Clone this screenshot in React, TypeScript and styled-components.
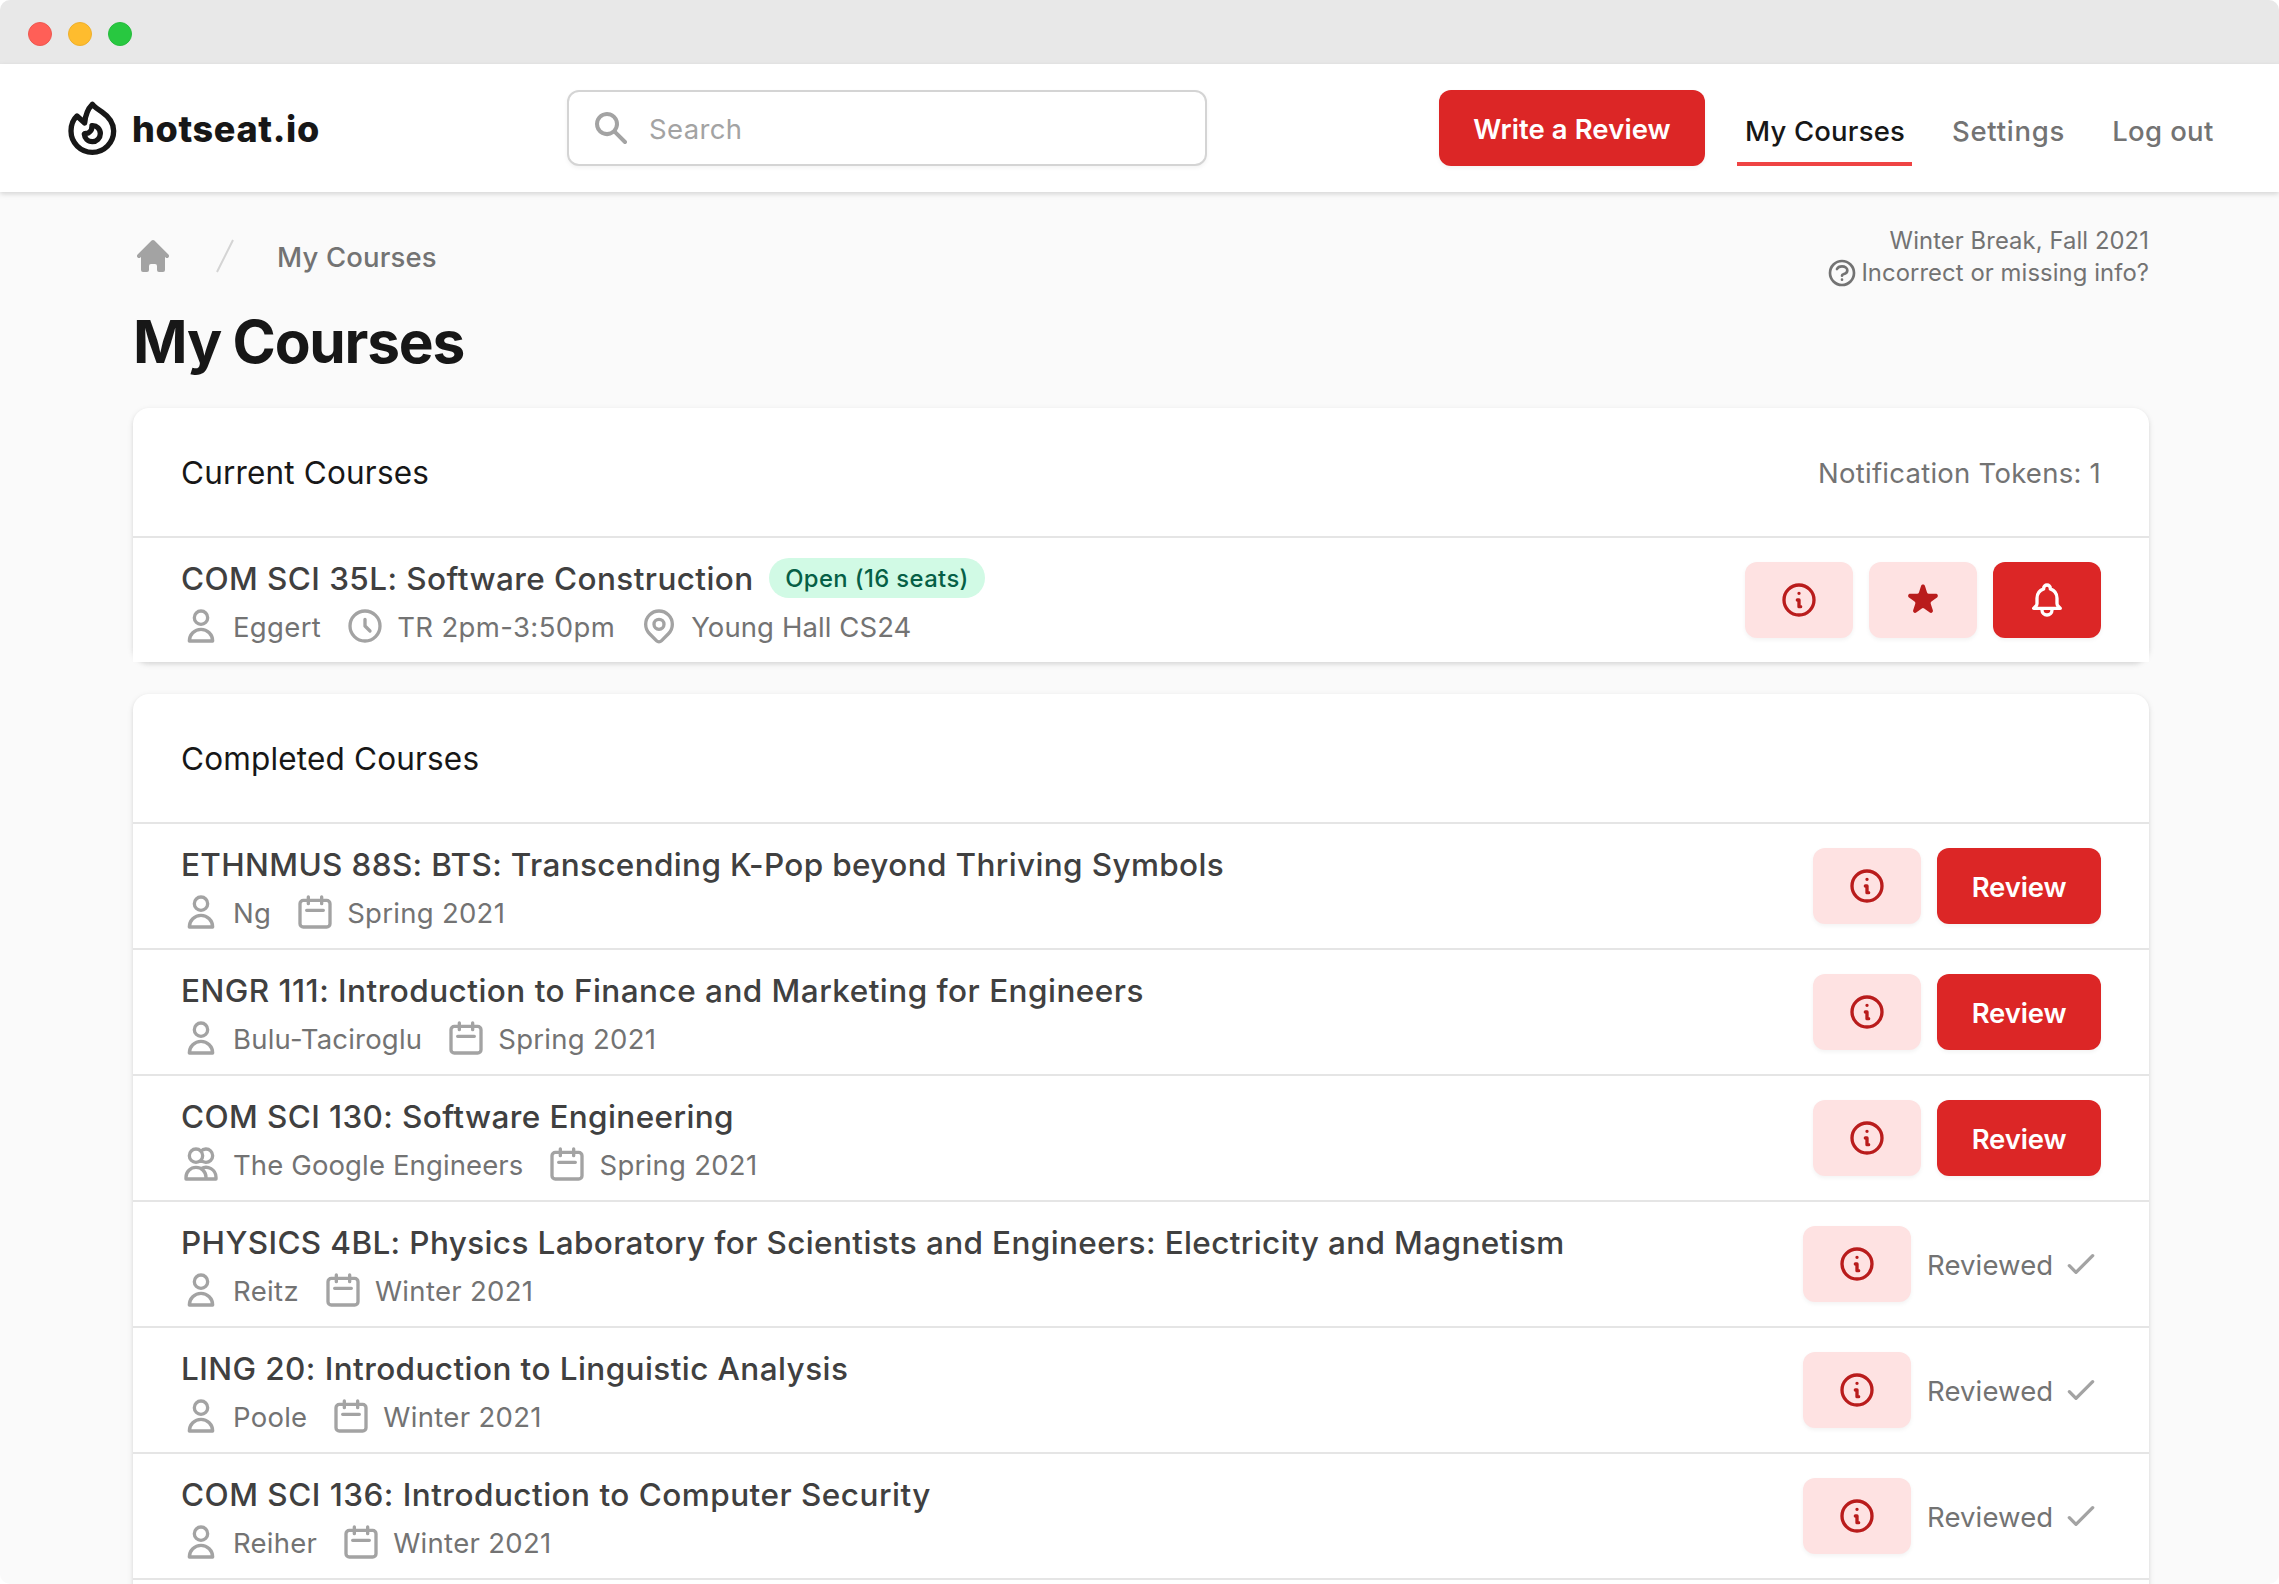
import React from 'react';
import styled, { createGlobalStyle, css } from 'styled-components';

const GlobalStyle = createGlobalStyle`
  *, *::before, *::after { box-sizing: border-box; }
  body {
    margin: 0;
    background: #ffffff;
    font-family: Inter, 'Liberation Sans', sans-serif;
    -webkit-font-smoothing: antialiased;
  }
  h1, h2, h3, ul, p { margin: 0; padding: 0; font-weight: inherit; font-size: inherit; }
  ul { list-style: none; }
  button, input { font: inherit; }
`;

const color = {
  ink: '#171717',
  title: '#404040',
  muted: '#737373',
  icon: '#a3a3a3',
  line: '#e5e5e5',
  page: '#fafafa',
  red: '#dc2626',
  redDark: '#b91c1c',
  redSoft: '#fee2e2',
};

/* ---------- icons ---------- */

const Svg = styled.svg<{ $size?: number; $color?: string }>`
  display: block;
  flex: none;
  width: ${(p) => p.$size ?? 40}px;
  height: ${(p) => p.$size ?? 40}px;
  color: ${(p) => p.$color ?? color.icon};
`;

type IconProps = { size?: number; tint?: string };

const outline = (d: string[]) =>
  function OutlineIcon({ size, tint }: IconProps) {
    return (
      <Svg
        $size={size}
        $color={tint}
        viewBox="0 0 24 24"
        fill="none"
        stroke="currentColor"
        strokeWidth={2}
        strokeLinecap="round"
        strokeLinejoin="round"
        aria-hidden
      >
        {d.map((path) => (
          <path key={path} d={path} />
        ))}
      </Svg>
    );
  };

const solid = (d: string) =>
  function SolidIcon({ size, tint }: IconProps) {
    return (
      <Svg $size={size} $color={tint} viewBox="0 0 20 20" fill="currentColor" aria-hidden>
        <path fillRule="evenodd" clipRule="evenodd" d={d} />
      </Svg>
    );
  };

const UserIcon = outline(['M16 7a4 4 0 11-8 0 4 4 0 018 0z', 'M12 14a7 7 0 00-7 7h14a7 7 0 00-7-7z']);
const UsersIcon = outline([
  'M12 4.354a4 4 0 110 5.292M15 21H3v-1a6 6 0 0112 0v1zm0 0h6v-1a6 6 0 00-9-5.197M13 7a4 4 0 11-8 0 4 4 0 018 0z',
]);
const CalendarIcon = outline([
  'M8 7V3m8 4V3m-9 8h10M5 21h14a2 2 0 002-2V7a2 2 0 00-2-2H5a2 2 0 00-2 2v12a2 2 0 002 2z',
]);
const ClockIcon = outline(['M12 8v4l3 3m6-3a9 9 0 11-18 0 9 9 0 0118 0z']);
const PinIcon = outline([
  'M17.657 16.657L13.414 20.9a1.998 1.998 0 01-2.827 0l-4.244-4.243a8 8 0 1111.314 0z',
  'M15 11a3 3 0 11-6 0 3 3 0 016 0z',
]);
const InfoIcon = outline(['M13 16h-1v-4h-1m1-4h.01M21 12a9 9 0 11-18 0 9 9 0 0118 0z']);
const BellIcon = outline([
  'M15 17h5l-1.405-1.405A2.032 2.032 0 0118 14.158V11a6.002 6.002 0 00-4-5.659V5a2 2 0 10-4 0v.341C7.67 6.165 6 8.388 6 11v3.159c0 .538-.214 1.055-.595 1.436L4 17h5m6 0v1a3 3 0 11-6 0v-1m6 0H9',
]);
const CheckIcon = outline(['M5 13l4 4L19 7']);
const QuestionIcon = outline([
  'M8.228 9c.549-1.165 2.03-2 3.772-2 2.21 0 4 1.343 4 3 0 1.4-1.278 2.575-3.006 2.907-.542.104-.994.54-.994 1.093m0 3h.01M21 12a9 9 0 11-18 0 9 9 0 0118 0z',
]);
const SearchIcon = solid(
  'M8 4a4 4 0 100 8 4 4 0 000-8zM2 8a6 6 0 1110.89 3.476l4.817 4.817a1 1 0 01-1.414 1.414l-4.816-4.816A6 6 0 012 8z',
);
const HomeIcon = solid(
  'M10.707 2.293a1 1 0 00-1.414 0l-7 7a1 1 0 001.414 1.414L4 10.414V17a1 1 0 001 1h2a1 1 0 001-1v-2a1 1 0 011-1h2a1 1 0 011 1v2a1 1 0 001 1h2a1 1 0 001-1v-6.586l.293.293a1 1 0 001.414-1.414l-7-7z',
);
const SlashIcon = solid('M5.555 17.776l8-16 .894.448-8 16-.894-.448z');
const StarIcon = solid(
  'M9.049 2.927c.3-.921 1.603-.921 1.902 0l1.07 3.292a1 1 0 00.95.69h3.462c.969 0 1.371 1.24.588 1.81l-2.8 2.034a1 1 0 00-.364 1.118l1.07 3.292c.3.921-.755 1.688-1.54 1.118l-2.8-2.034a1 1 0 00-1.175 0l-2.8 2.034c-.784.57-1.838-.197-1.539-1.118l1.07-3.292a1 1 0 00-.364-1.118L2.98 8.72c-.783-.57-.38-1.81.588-1.81h3.461a1 1 0 00.951-.69l1.07-3.292z',
);

const FlameSvg = styled.svg`
  display: block;
  flex: none;
  width: 50.67px;
  height: 58.67px;
`;

const FlameLogo = () => (
  <FlameSvg
    viewBox="50 56 152 176"
    fill="none"
    stroke={color.ink}
    strokeWidth={16}
    strokeLinejoin="round"
    strokeLinecap="round"
    aria-hidden
  >
    <path d="M126 72C114 84 105 104 103 128L80 107C68 118 62 134 62 152A64 64 0 0 0 190 152C190 124 174 108 155 95C144 88 134 81 126 72Z" />
    <path d="M125 136C140 135 150 146 150 160A24.500 24.500 0 0 1 126 184C112 184 103 174 102 161C104 157 109 161 114 158C122 153 126 145 125 136Z" />
  </FlameSvg>
);

/* ---------- window chrome ---------- */

const Window = styled.div`
  width: 2279px;
  height: 1584px;
  overflow: hidden;
  border-radius: 10px;
  background: ${color.page};
  color: ${color.ink};
`;

const TitleBar = styled.div`
  display: flex;
  align-items: center;
  gap: 16px;
  height: 64px;
  padding: 4px 0 0 28px;
  background: #e8e8e8;
`;

const Light = styled.span<{ $fill: string; $edge: string }>`
  width: 24px;
  height: 24px;
  border-radius: 50%;
  background: ${(p) => p.$fill};
  border: 1px solid ${(p) => p.$edge};
`;

/* ---------- header ---------- */

const Header = styled.header`
  display: flex;
  align-items: center;
  height: 128px;
  padding-left: 66.7px;
  background: #ffffff;
  box-shadow: 0 2px 6px rgba(0, 0, 0, 0.1), 0 2px 4px rgba(0, 0, 0, 0.06);
`;

const Brand = styled.a`
  display: flex;
  align-items: center;
  gap: 14.6px;
  width: 500.3px;
  flex: none;
`;

const BrandName = styled.span`
  padding-top: 2px;
  font-size: 36px;
  line-height: 44px;
  font-weight: 800;
  letter-spacing: 0.656px;
`;

const SearchBox = styled.label`
  display: flex;
  align-items: center;
  gap: 18px;
  flex: none;
  width: 640px;
  height: 76px;
  padding: 0 22px;
  background: #ffffff;
  border: 2px solid #d4d4d4;
  border-radius: 12px;
  box-shadow: 0 2px 4px rgba(0, 0, 0, 0.05);
`;

const SearchInput = styled.input`
  flex: 1;
  min-width: 0;
  padding: 1px 0 0;
  border: 0;
  outline: 0;
  background: transparent;
  font-size: 27.5px;
  line-height: 40px;
  letter-spacing: 0.35px;
  &::placeholder {
    color: ${color.icon};
    opacity: 1;
  }
`;

const Nav = styled.nav`
  display: flex;
  gap: 32px;
  margin-left: 232px;
`;

const NavLink = styled.a<{ $active?: boolean; $track: number }>`
  height: 76px;
  padding: 20px 7px 0 8px;
  border-bottom: 4px solid ${(p) => (p.$active ? '#ef4444' : 'transparent')};
  color: ${(p) => (p.$active ? color.ink : color.muted)};
  font-size: 27.5px;
  line-height: 42px;
  font-weight: 500;
  letter-spacing: ${(p) => p.$track}px;
  white-space: nowrap;
`;

const Button = styled.button<{ $soft?: boolean; $width: number; $track?: number }>`
  display: flex;
  align-items: center;
  justify-content: center;
  flex: none;
  width: ${(p) => p.$width}px;
  height: 76px;
  padding: 0;
  border: 0;
  border-radius: 12px;
  box-shadow: 0 2px 4px rgba(0, 0, 0, 0.05);
  font-size: 27.5px;
  line-height: 40px;
  font-weight: 600;
  letter-spacing: ${(p) => p.$track ?? 0}px;
  white-space: nowrap;
  ${(p) =>
    p.$soft
      ? css`
          background: ${color.redSoft};
          color: ${color.redDark};
        `
      : css`
          background: ${color.red};
          color: #ffffff;
        `}
`;

const Label = styled.span`
  padding-top: 1px;
`;

/* ---------- page heading ---------- */

const Main = styled.main`
  padding: 0 130px 0 133px;
`;

const Intro = styled.div`
  display: flex;
  justify-content: space-between;
  align-items: flex-start;
  height: 216px;
`;

const Heading = styled.div`
  padding-top: 44px;
`;

const Breadcrumbs = styled.nav`
  display: flex;
  align-items: center;
  gap: 32px;
  height: 40px;
`;

const Crumb = styled.span`
  padding-top: 1px;
  color: ${color.muted};
  font-size: 27.5px;
  line-height: 38px;
  font-weight: 500;
  letter-spacing: 0.16px;
`;

const PageTitle = styled.h1`
  margin-top: 26px;
  font-size: 58.6px;
  line-height: 80px;
  font-weight: 700;
  letter-spacing: -1.25px;
  word-spacing: -1px;
`;

const Term = styled.div`
  display: flex;
  flex-direction: column;
  align-items: flex-end;
  padding-top: 33px;
  color: ${color.muted};
  font-size: 23.8px;
  line-height: 32px;
  letter-spacing: 0.09px;
`;

const TermLink = styled.a`
  display: flex;
  align-items: center;
  gap: 3px;
`;

/* ---------- cards ---------- */

const Card = styled.section`
  margin-bottom: 32px;
  background: #ffffff;
  border-radius: 16px;
  box-shadow: 0 2px 6px rgba(0, 0, 0, 0.1), 0 2px 4px rgba(0, 0, 0, 0.06);
`;

const CardHeader = styled.header`
  display: flex;
  align-items: center;
  justify-content: space-between;
  height: 128px;
  padding: 0 48px;
`;

const CardTitle = styled.h2`
  padding-top: 2px;
  font-size: 31.5px;
  line-height: 46px;
  letter-spacing: 0.17px;
`;

const Tokens = styled.p`
  padding-top: 1px;
  color: ${color.muted};
  font-size: 27.5px;
  line-height: 38px;
  letter-spacing: 0.25px;
`;

const Row = styled.li`
  display: flex;
  align-items: center;
  justify-content: space-between;
  height: 126px;
  padding: 0 48px;
  background: #ffffff;
  border-top: 2px solid ${color.line};
`;

const TitleLine = styled.div`
  display: flex;
  align-items: center;
  gap: 15.500px;
  height: 48px;
  margin-bottom: 4px;
`;

const CourseTitle = styled.h3<{ $track: number }>`
  padding-top: 2px;
  color: ${color.title};
  font-size: 31.5px;
  line-height: 46px;
  font-weight: 500;
  letter-spacing: ${(p) => p.$track}px;
  white-space: nowrap;
`;

const Badge = styled.span`
  display: flex;
  align-items: center;
  width: 216px;
  height: 40px;
  padding: 1px 0 0 16px;
  border-radius: 20px;
  background: #d1fae5;
  color: #065f46;
  font-size: 23.8px;
  line-height: 39px;
  font-weight: 500;
  letter-spacing: 0.4px;
  white-space: nowrap;
`;

const MetaLine = styled.div`
  display: flex;
  gap: 24px;
`;

const Meta = styled.span<{ $track: number }>`
  display: flex;
  align-items: center;
  gap: 12px;
  height: 40px;
  color: ${color.muted};
  font-size: 27.5px;
  line-height: 38px;
  letter-spacing: ${(p) => p.$track}px;
  white-space: nowrap;
`;

const Actions = styled.div`
  display: flex;
  align-items: center;
  gap: 16px;
`;

const Reviewed = styled.span`
  display: flex;
  align-items: center;
  justify-content: space-between;
  width: 174px;
  color: ${color.muted};
  font-size: 27.5px;
  line-height: 38px;
  letter-spacing: 0.12px;
`;

/* ---------- data ---------- */

type Fact = { icon: React.ComponentType<IconProps>; text: string; track: number };
type Course = { title: string; track: number; facts: Fact[]; seats?: string; reviewed?: boolean };

const spring: Fact = { icon: CalendarIcon, text: 'Spring 2021', track: 0.28 };
const winter: Fact = { icon: CalendarIcon, text: 'Winter 2021', track: 0.32 };

const current: Course = {
  title: 'COM SCI 35L: Software Construction',
  track: 0.42,
  seats: 'Open (16 seats)',
  facts: [
    { icon: UserIcon, text: 'Eggert', track: 0.34 },
    { icon: ClockIcon, text: 'TR 2pm-3:50pm', track: 0.38 },
    { icon: PinIcon, text: 'Young Hall CS24', track: 0.09 },
  ],
};

const completed: Course[] = [
  {
    title: 'ETHNMUS 88S: BTS: Transcending K-Pop beyond Thriving Symbols',
    track: 0.36,
    facts: [{ icon: UserIcon, text: 'Ng', track: 0.3 }, spring],
  },
  {
    title: 'ENGR 111: Introduction to Finance and Marketing for Engineers',
    track: 0.47,
    facts: [{ icon: UserIcon, text: 'Bulu-Taciroglu', track: 0.2 }, spring],
  },
  {
    title: 'COM SCI 130: Software Engineering',
    track: 0.39,
    facts: [{ icon: UsersIcon, text: 'The Google Engineers', track: 0.12 }, spring],
  },
  {
    title: 'PHYSICS 4BL: Physics Laboratory for Scientists and Engineers: Electricity and Magnetism',
    track: 0.37,
    facts: [{ icon: UserIcon, text: 'Reitz', track: 0.35 }, winter],
    reviewed: true,
  },
  {
    title: 'LING 20: Introduction to Linguistic Analysis',
    track: 0.42,
    facts: [{ icon: UserIcon, text: 'Poole', track: 0.25 }, winter],
    reviewed: true,
  },
  {
    title: 'COM SCI 136: Introduction to Computer Security',
    track: 0.48,
    facts: [{ icon: UserIcon, text: 'Reiher', track: 0.25 }, winter],
    reviewed: true,
  },
];

const CourseInfo = ({ course }: { course: Course }) => (
  <div>
    <TitleLine>
      <CourseTitle $track={course.track}>{course.title}</CourseTitle>
      {course.seats && <Badge>{course.seats}</Badge>}
    </TitleLine>
    <MetaLine>
      {course.facts.map(({ icon: Icon, text, track }) => (
        <Meta key={text} $track={track}>
          <Icon />
          <Label>{text}</Label>
        </Meta>
      ))}
    </MetaLine>
  </div>
);

const InfoButton = () => (
  <Button $soft $width={108} aria-label="Course info">
    <InfoIcon tint={color.redDark} />
  </Button>
);

export default function App() {
  return (
    <>
      <GlobalStyle />
      <Window>
        <TitleBar>
          <Light $fill="#ff5f57" $edge="#ee5850" />
          <Light $fill="#febc2e" $edge="#eeb02c" />
          <Light $fill="#28c840" $edge="#26bc3d" />
        </TitleBar>
        <Header>
          <Brand>
            <FlameLogo />
            <BrandName>hotseat.io</BrandName>
          </Brand>
          <SearchBox>
            <SearchIcon />
            <SearchInput placeholder="Search" />
          </SearchBox>
          <Nav>
            <Button $width={266} $track={0.08}>
              <Label>Write a Review</Label>
            </Button>
            <NavLink $active $track={0.18}>
              My Courses
            </NavLink>
            <NavLink $track={0.75}>Settings</NavLink>
            <NavLink $track={0.36}>Log out</NavLink>
          </Nav>
        </Header>
        <Main>
          <Intro>
            <Heading>
              <Breadcrumbs>
                <HomeIcon />
                <SlashIcon tint="#d4d4d4" />
                <Crumb>My Courses</Crumb>
              </Breadcrumbs>
              <PageTitle>My Courses</PageTitle>
            </Heading>
            <Term>
              <span>Winter Break, Fall 2021</span>
              <TermLink>
                <QuestionIcon size={32} tint={color.muted} />
                <span>Incorrect or missing info?</span>
              </TermLink>
            </Term>
          </Intro>
          <Card>
            <CardHeader>
              <CardTitle>Current Courses</CardTitle>
              <Tokens>Notification Tokens: 1</Tokens>
            </CardHeader>
            <ul>
              <Row>
                <CourseInfo course={current} />
                <Actions>
                  <InfoButton />
                  <Button $soft $width={108} aria-label="Favorite">
                    <StarIcon tint={color.redDark} />
                  </Button>
                  <Button $width={108} aria-label="Notify me">
                    <BellIcon tint="#ffffff" />
                  </Button>
                </Actions>
              </Row>
            </ul>
          </Card>
          <Card>
            <CardHeader>
              <CardTitle>Completed Courses</CardTitle>
            </CardHeader>
            <ul>
              {completed.map((course) => (
                <Row key={course.title}>
                  <CourseInfo course={course} />
                  <Actions>
                    <InfoButton />
                    {course.reviewed ? (
                      <Reviewed>
                        <Label>Reviewed</Label>
                        <CheckIcon />
                      </Reviewed>
                    ) : (
                      <Button $width={164} $track={-0.15}>
                        <Label>Review</Label>
                      </Button>
                    )}
                  </Actions>
                </Row>
              ))}
              <Row />
            </ul>
          </Card>
        </Main>
      </Window>
    </>
  );
}
